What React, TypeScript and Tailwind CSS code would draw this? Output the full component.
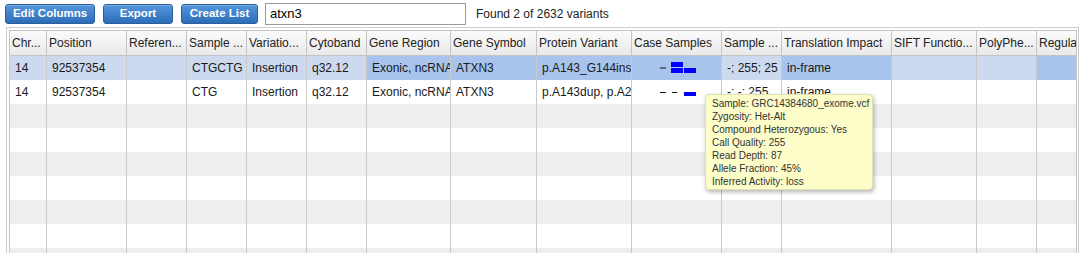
import React from 'react'

const widths = [
  'w-[37px]', 'w-[80px]', 'w-[60px]', 'w-[60px]', 'w-[60px]', 'w-[60px]', 'w-[84px]', 'w-[86px]',
  'w-[95px]', 'w-[90px]', 'w-[60px]', 'w-[110px]', 'w-[85px]', 'w-[60px]', 'w-[39px]',
]

const headers = [
  'Chr...', 'Position', 'Referen...', 'Sample ...', 'Variatio...', 'Cytoband', 'Gene Region', 'Gene Symbol',
  'Protein Variant', 'Case Samples', 'Sample ...', 'Translation Impact', 'SIFT Functio...', 'PolyPhe...', 'Regula',
]

// columns that get the stronger highlight on the selected row
const focusCols = [6, 7, 8, 9, 11, 14]

function CaseGlyph({ row }: { row: number }) {
  return (
    <svg width="38" height="24" viewBox="0 0 38 24" className="block">
      {row === 0 ? (
        <>
          <rect x="2" y="11.5" width="6" height="1" fill="#111" />
          <rect x="13" y="6" width="12" height="5" fill="#0000ff" />
          <rect x="13" y="12" width="12" height="5" fill="#0000ff" />
          <rect x="26" y="12" width="12" height="5" fill="#0000ff" />
        </>
      ) : (
        <>
          <rect x="2" y="12" width="6" height="1" fill="#111" />
          <rect x="14" y="12" width="5" height="1" fill="#111" />
          <rect x="26" y="12" width="12" height="4" fill="#0000ff" />
        </>
      )}
    </svg>
  )
}

const rows: (string | null)[][] = [
  ['14', '92537354', '', 'CTGCTG', 'Insertion', 'q32.12', 'Exonic, ncRNA', 'ATXN3', 'p.A143_G144ins', null, '-; 255; 25', 'in-frame', '', '', ''],
  ['14', '92537354', '', 'CTG', 'Insertion', 'q32.12', 'Exonic, ncRNA', 'ATXN3', 'p.A143dup, p.A2', null, '-; -; 255', 'in-frame', '', '', ''],
]

function Button({ label, w }: { label: string; w: string }) {
  return (
    <button
      className={`${w} h-[20px] rounded-[3px] border border-[#2a5e9c] bg-linear-to-b from-[#5496de] to-[#2c6db7] text-white text-[11.5px] font-bold leading-none shadow-[inset_0_1px_0_rgba(255,255,255,0.25)]`}
    >
      {label}
    </button>
  )
}

export default function App() {
  const emptyRows = Array.from({ length: 7 })

  return (
    <div className="relative w-[1080px] h-[253px] overflow-hidden bg-white font-['Liberation_Sans',Arial,sans-serif] text-[12px] text-[#1a1a1a]">
      {/* Toolbar */}
      <div className="flex items-center h-[27px] pl-[5px]">
        <Button label="Edit Columns" w="w-[90px]" />
        <div className="ml-[8px]">
          <Button label="Export" w="w-[70px]" />
        </div>
        <div className="ml-[8px]">
          <Button label="Create List" w="w-[77px]" />
        </div>
        <input
          value="atxn3"
          readOnly
          className="ml-[7px] w-[201px] h-[22px] border border-[#9a9a9a] px-[4px] text-[13px] text-black outline-none"
        />
        <span className="ml-[10px] text-[12px] text-[#222]">Found 2 of 2632 variants</span>
      </div>

      {/* Grid */}
      <div className="ml-[6px] w-[1073px] h-[240px] border border-[#cdcdcd] pl-[2px] pr-[1px] pt-[2px]">
        <div className="w-[1068px] h-full border border-[#c4c4c4] overflow-hidden">
          <div className="flex h-[25px] border-b border-[#c4c4c4] bg-linear-to-b from-[#fbfbfb] to-[#e9e9e9]">
            {headers.map((h, i) => (
              <div
                key={i}
                className={`${widths[i]} shrink-0 flex items-center pl-[2px] overflow-hidden whitespace-nowrap text-[#222] ${i < 14 ? 'border-r border-[#c4c4c4]' : ''}`}
              >
                {h}
              </div>
            ))}
          </div>

          {rows.map((r, ri) => (
            <div key={ri} className={`flex h-[24px] ${ri === 0 ? 'bg-[#ccd9ee]' : 'bg-white'}`}>
              {r.map((c, i) => (
                <div
                  key={i}
                  className={`${widths[i]} shrink-0 flex items-center overflow-hidden whitespace-nowrap ${
                    i === 9 ? 'justify-center' : 'pl-[5px]'
                  } ${i < 14 ? 'border-r border-[#c9c9c9]' : ''} ${
                    ri === 0 && focusCols.includes(i) ? 'bg-[#a8c4ec]' : ''
                  }`}
                >
                  {i === 9 ? <CaseGlyph row={ri} /> : c}
                </div>
              ))}
            </div>
          ))}

          {emptyRows.map((_, ri) => (
            <div key={ri} className={`flex h-[24px] ${ri % 2 === 0 ? 'bg-[#eeeeee]' : 'bg-white'}`}>
              {widths.map((w, i) => (
                <div key={i} className={`${w} shrink-0 ${i < 14 ? 'border-r border-[#c9c9c9]' : ''}`} />
              ))}
            </div>
          ))}
        </div>
      </div>

      {/* Tooltip */}
      <div className="absolute left-[705px] top-[94px] w-[168px] h-[96px] rounded-[4px] border border-[#e2e2b4] bg-[#fdfdca] pl-[6px] pt-[2px] text-[10px] leading-[13px] text-[#333] shadow-[1px_2px_4px_rgba(0,0,0,0.3)]">
        <div>Sample: GRC14384680_exome.vcf</div>
        <div>Zygosity: Het-Alt</div>
        <div>Compound Heterozygous: Yes</div>
        <div>Call Quality: 255</div>
        <div>Read Depth: 87</div>
        <div>Allele Fraction: 45%</div>
        <div>Inferred Activity: loss</div>
      </div>
    </div>
  )
}
